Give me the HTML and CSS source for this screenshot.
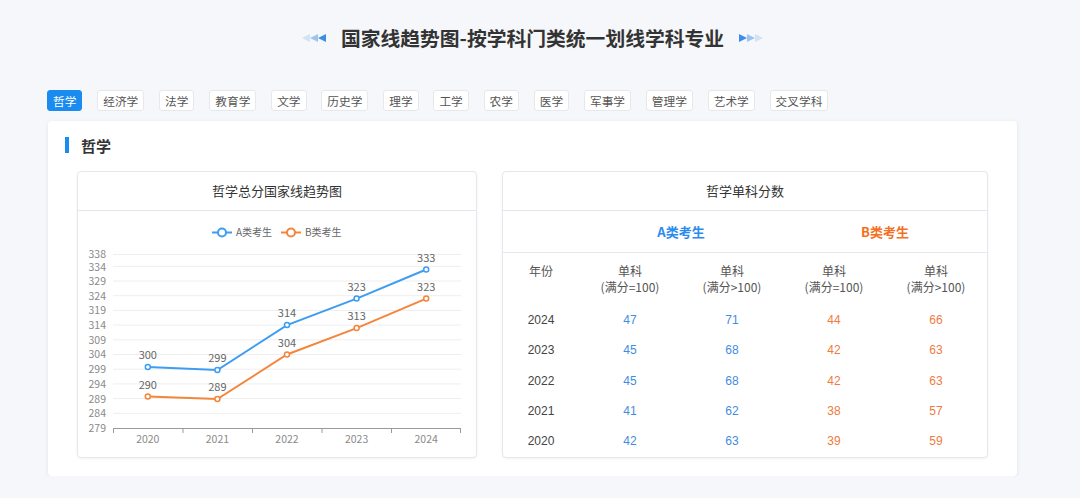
FILE: index.html
```html
<!DOCTYPE html>
<html lang="zh">
<head>
<meta charset="utf-8">
<title>国家线趋势图</title>
<link rel="stylesheet" href="styles.css">
</head>
<body>
<div class="page">
  <div class="title-row">
    <svg class="arrows" width="24" height="10" viewBox="0 0 24 10">
      <polygon points="0,5 8,1 8,9" fill="#d3e2f4"/>
      <polygon points="8,5 16,1 16,9" fill="#9ec4ee"/>
      <polygon points="16,5 24,1 24,9" fill="#3d8de6"/>
    </svg>
    <h1 class="title">国家线趋势图-按学科门类统一划线学科专业</h1>
    <svg class="arrows" width="24" height="10" viewBox="0 0 24 10">
      <polygon points="8,5 0,1 0,9" fill="#3d8de6"/>
      <polygon points="16,5 8,1 8,9" fill="#9ec4ee"/>
      <polygon points="24,5 16,1 16,9" fill="#d3e2f4"/>
    </svg>
  </div>

  <div class="tabs">
    <span class="tab active">哲学</span>
    <span class="tab">经济学</span>
    <span class="tab">法学</span>
    <span class="tab">教育学</span>
    <span class="tab">文学</span>
    <span class="tab">历史学</span>
    <span class="tab">理学</span>
    <span class="tab">工学</span>
    <span class="tab">农学</span>
    <span class="tab">医学</span>
    <span class="tab">军事学</span>
    <span class="tab">管理学</span>
    <span class="tab">艺术学</span>
    <span class="tab">交叉学科</span>
  </div>

  <div class="card">
    <div class="card-head"><span class="bar"></span><span class="card-title">哲学</span></div>
    <div class="panels">
      <div class="panel">
        <div class="panel-head">哲学总分国家线趋势图</div>
        <div class="chart">
          <svg width="398" height="246" viewBox="78 211 398 246" class="chart-svg">
            <!-- legend -->
            <g class="legend">
              <line x1="212" y1="232.5" x2="232" y2="232.5" stroke="#3d9df2" stroke-width="2"/>
              <circle cx="222" cy="232.5" r="4" fill="#fff" stroke="#3d9df2" stroke-width="2"/>
              <text x="236" y="236">A类考生</text>
              <line x1="281" y1="232.5" x2="301" y2="232.5" stroke="#f4863c" stroke-width="2"/>
              <circle cx="291" cy="232.5" r="4" fill="#fff" stroke="#f4863c" stroke-width="2"/>
              <text x="305" y="236">B类考生</text>
            </g>
            <!-- grid -->
            <g stroke="#eeeeee" stroke-width="1">
              <line x1="113" x2="461" y1="254.5" y2="254.5"/>
              <line x1="113" x2="461" y1="266.3" y2="266.3"/>
              <line x1="113" x2="461" y1="281" y2="281"/>
              <line x1="113" x2="461" y1="295.7" y2="295.7"/>
              <line x1="113" x2="461" y1="310.4" y2="310.4"/>
              <line x1="113" x2="461" y1="325.1" y2="325.1"/>
              <line x1="113" x2="461" y1="339.8" y2="339.8"/>
              <line x1="113" x2="461" y1="354.5" y2="354.5"/>
              <line x1="113" x2="461" y1="369.2" y2="369.2"/>
              <line x1="113" x2="461" y1="383.9" y2="383.9"/>
              <line x1="113" x2="461" y1="398.6" y2="398.6"/>
              <line x1="113" x2="461" y1="413.3" y2="413.3"/>
            </g>
            <!-- y labels -->
            <g class="ylab" text-anchor="end">
              <text x="106" y="257.5">338</text>
              <text x="106" y="270.5">334</text>
              <text x="106" y="285">329</text>
              <text x="106" y="299.5">324</text>
              <text x="106" y="314">319</text>
              <text x="106" y="329">314</text>
              <text x="106" y="343.5">309</text>
              <text x="106" y="358">304</text>
              <text x="106" y="373">299</text>
              <text x="106" y="387.5">294</text>
              <text x="106" y="402.5">289</text>
              <text x="106" y="417">284</text>
              <text x="106" y="432">279</text>
            </g>
            <!-- x axis -->
            <g stroke="#9a9a9a" stroke-width="1">
              <line x1="113" x2="461" y1="428.5" y2="428.5"/>
              <line x1="113.5" x2="113.5" y1="428" y2="433"/>
              <line x1="183" x2="183" y1="428" y2="433"/>
              <line x1="252.5" x2="252.5" y1="428" y2="433"/>
              <line x1="322" x2="322" y1="428" y2="433"/>
              <line x1="391.5" x2="391.5" y1="428" y2="433"/>
              <line x1="460.5" x2="460.5" y1="428" y2="433"/>
            </g>
            <g class="xlab" text-anchor="middle">
              <text x="147.8" y="443">2020</text>
              <text x="217.4" y="443">2021</text>
              <text x="287" y="443">2022</text>
              <text x="356.6" y="443">2023</text>
              <text x="426.2" y="443">2024</text>
            </g>
            <!-- series A -->
            <polyline points="147.8,367 217.4,370 287,325.1 356.6,298.6 426.2,269.5" fill="none" stroke="#3d9df2" stroke-width="2"/>
            <g fill="#fff" stroke="#3d9df2" stroke-width="1.5">
              <circle cx="147.8" cy="367" r="2.5"/>
              <circle cx="217.4" cy="370" r="2.5"/>
              <circle cx="287" cy="325.1" r="2.5"/>
              <circle cx="356.6" cy="298.6" r="2.5"/>
              <circle cx="426.2" cy="269.5" r="2.5"/>
            </g>
            <!-- series B -->
            <polyline points="147.8,396.5 217.4,399 287,354.5 356.6,328.1 426.2,298.6" fill="none" stroke="#f4863c" stroke-width="2"/>
            <g fill="#fff" stroke="#f4863c" stroke-width="1.5">
              <circle cx="147.8" cy="396.5" r="2.5"/>
              <circle cx="217.4" cy="399" r="2.5"/>
              <circle cx="287" cy="354.5" r="2.5"/>
              <circle cx="356.6" cy="328.1" r="2.5"/>
              <circle cx="426.2" cy="298.6" r="2.5"/>
            </g>
            <g class="vlab" text-anchor="middle">
              <text x="147.8" y="358.5">300</text>
              <text x="217.4" y="362">299</text>
              <text x="287" y="317">314</text>
              <text x="356.6" y="290.5">323</text>
              <text x="426.2" y="261.5">333</text>
              <text x="147.8" y="388.5">290</text>
              <text x="217.4" y="391">289</text>
              <text x="287" y="346.5">304</text>
              <text x="356.6" y="320">313</text>
              <text x="426.2" y="290.5">323</text>
            </g>
          </svg>
        </div>
      </div>

      <div class="panel">
        <div class="panel-head">哲学单科分数</div>
        <div class="grp-row">
          <div></div>
          <div class="grp a">A类考生</div>
          <div class="grp b">B类考生</div>
        </div>
        <div class="tbl">
          <div class="th">年份</div>
          <div class="th">单科<br>(满分=100)</div>
          <div class="th">单科<br>(满分&gt;100)</div>
          <div class="th">单科<br>(满分=100)</div>
          <div class="th">单科<br>(满分&gt;100)</div>

          <div class="td yr">2024</div><div class="td va">47</div><div class="td va">71</div><div class="td vb">44</div><div class="td vb">66</div>
          <div class="td yr">2023</div><div class="td va">45</div><div class="td va">68</div><div class="td vb">42</div><div class="td vb">63</div>
          <div class="td yr">2022</div><div class="td va">45</div><div class="td va">68</div><div class="td vb">42</div><div class="td vb">63</div>
          <div class="td yr">2021</div><div class="td va">41</div><div class="td va">62</div><div class="td vb">38</div><div class="td vb">57</div>
          <div class="td yr">2020</div><div class="td va">42</div><div class="td va">63</div><div class="td vb">39</div><div class="td vb">59</div>
        </div>
      </div>
    </div>
  </div>
</div>
</body>
</html>
```

FILE: styles.css
```css
* { box-sizing: border-box; }

body {
  margin: 0;
  background: #f5f7fa;
  font-family: "Liberation Sans", "Noto Sans CJK SC", sans-serif;
  color: #333;
}

.page {
  width: 969px;
  margin-left: 48px;
}

.title-row {
  display: flex;
  align-items: center;
  justify-content: center;
  gap: 15px;
  padding-top: 26px;
  height: 50px;
}

.title {
  margin: 0;
  font-family: "Noto Sans CJK SC", sans-serif;
  font-size: 19.8px;
  line-height: 24px;
  font-weight: 700;
  color: #333;
}

.arrows { display: block; }

.tabs {
  display: flex;
  gap: 14.8px;
  margin-top: 40px;
  margin-left: -1px;
}

.tab {
  display: block;
  height: 21px;
  padding: 0 5px;
  border: 1px solid #e6e8eb;
  border-radius: 3px;
  background: #fff;
  font-family: "Noto Sans CJK SC", sans-serif;
  font-size: 11.7px;
  line-height: 19px;
  color: #555;
}

.tab.active {
  background: #1a8cf0;
  border-color: #1a8cf0;
  color: #fff;
}

.card {
  margin-top: 10px;
  background: #fff;
  border-radius: 4px;
  box-shadow: 0 1px 4px rgba(0, 0, 0, 0.08);
  padding: 16px 29px 18px 29px;
  height: 355px;
}

.card-head {
  display: flex;
  align-items: center;
  height: 16px;
  margin-left: -12px;
}

.bar {
  width: 4px;
  height: 16px;
  background: #1a8cf0;
  margin-right: 12px;
}

.card-title {
  font-family: "Noto Sans CJK SC", sans-serif;
  font-size: 15px;
  font-weight: 700;
  color: #333;
}

.panels {
  display: grid;
  grid-template-columns: 400px 486px;
  gap: 25px;
  margin-top: 18px;
}

.panel {
  height: 287px;
  border: 1px solid #e4e7ed;
  border-radius: 4px;
  box-shadow: 0 1px 3px rgba(0, 0, 0, 0.05);
  background: #fff;
  overflow: hidden;
}

.panel-head {
  height: 39px;
  border-bottom: 1px solid #e4e7ed;
  text-align: center;
  font-family: "Noto Sans CJK SC", sans-serif;
  font-size: 13px;
  line-height: 38px;
  color: #333;
}

.chart-svg { display: block; }

.legend text {
  font-family: "Noto Sans CJK SC", sans-serif;
  font-size: 10px;
  fill: #666;
}

.ylab text, .xlab text {
  font-family: "Noto Sans CJK SC", sans-serif;
  font-size: 10.5px;
  fill: #8a8a8a;
}

.vlab text {
  font-family: "Noto Sans CJK SC", sans-serif;
  font-size: 11px;
  fill: #666;
}

.grp-row {
  display: grid;
  grid-template-columns: 76px 1fr 1fr;
  height: 42px;
  border-bottom: 1px solid #e4e7ed;
  align-items: center;
}

.grp {
  text-align: center;
  font-family: "Noto Sans CJK SC", sans-serif;
  font-size: 13px;
  font-weight: 700;
}

.grp.a { color: #2a8bef; }
.grp.b { color: #f5701e; }

.tbl {
  display: grid;
  grid-template-columns: 76px repeat(4, 1fr);
  grid-template-rows: 52px repeat(5, 30.25px);
}

.th {
  padding-top: 10px;
  text-align: center;
  font-family: "Noto Sans CJK SC", sans-serif;
  font-size: 12px;
  line-height: 16px;
  color: #555;
}

.td {
  text-align: center;
  font-size: 12px;
  line-height: 30px;
}

.yr { color: #444; }
.va { color: #3f8ce2; }
.vb { color: #ef7b41; }
```
